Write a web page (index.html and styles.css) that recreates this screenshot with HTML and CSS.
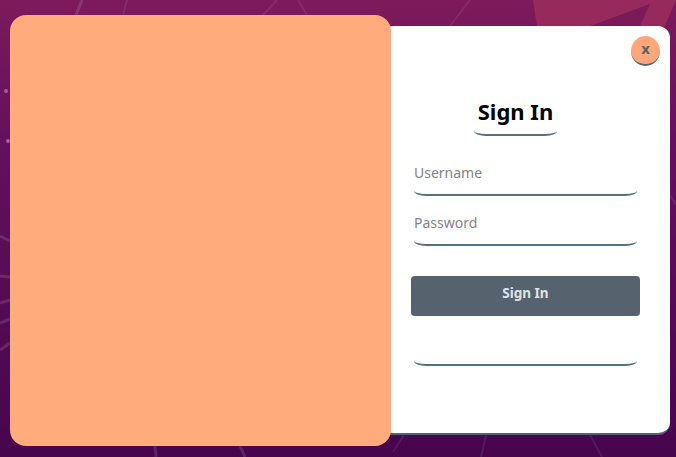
FILE: index.html
```html
<!DOCTYPE html>
<html>
<head>
	<title>Sign In</title>
	<link rel="stylesheet" href="styles.css">
</head>
<body>
	<!--faint lines and dots of the page background-->
	<svg class="backdrop" viewBox="0 0 676 457" aria-hidden="true">
		<path class="shard" d="M533 0H676L665 26H590L537 26Z"/>
		<path class="shard-dark" d="M590 26L650 4L640 26Z"/>
		<g class="lines">
			<path class="thick" d="M82 0L76 15"/>
			<path d="M127 0L123 15"/>
			<path d="M277 0L263 15M298 0L307 15"/>
			<path d="M470 0L450 26"/>
			<path class="thick" d="M0 236L10 241M0 276L10 277M0 303L10 300M0 323L10 319M0 350L10 343"/>
			<path class="thick" d="M155 446L156 457M240 446L245 457"/>
			<path d="M404 435L393 452M486 435L481 457M590 435L602 457"/>
			<path d="M670 195L676 205"/>
		</g>
		<circle class="dot" cx="6" cy="91" r="2"/>
		<circle class="dot" cx="8" cy="141" r="2"/>
	</svg>

	<div class="modal">
		<div class="side-panel"></div>
		<div class="card">
			<button class="close-btn">x</button>
			<h2 class="title">Sign In</h2>
			<form class="login-form">
				<input class="field" type="text" placeholder="Username">
				<input class="field" type="password" placeholder="Password">
				<button class="submit-btn" type="button">Sign In</button>
				<input class="field field-empty" type="text">
			</form>
		</div>
	</div>
</body>
</html>
```

FILE: styles.css
```css
* {
	box-sizing: border-box;
}
html, body {
	height: 100%;
}
body {
	margin: 0;
	padding: 15px 6px 11px 10px;
	overflow: hidden;
	background: linear-gradient(#7d1a5b 0%, #65105f 30%, #47054e 100%);
	font-family: "Noto Sans", "Open Sans", sans-serif;
}
.backdrop {
	position: absolute;
	left: 0;
	top: 0;
	width: 676px;
	height: 457px;
}
.shard {
	fill: #962a5c;
}
.shard-dark {
	fill: #7c1a58;
}
.lines path {
	fill: none;
	stroke: #fff;
	stroke-opacity: 0.08;
	stroke-width: 2;
}
.lines .thick {
	stroke-width: 3;
	stroke-opacity: 0.12;
}
.dot {
	fill: #a45ca6;
}
.modal {
	position: relative;
	display: flex;
	align-items: center;
	height: 431px;
}
.side-panel {
	position: relative;
	z-index: 1;
	flex: none;
	width: 381px;
	height: 100%;
	margin-right: -10px;
	background: #ffab7c;
	border-radius: 16px;
}
.card {
	flex: none;
	display: flex;
	flex-direction: column;
	width: 289px;
	height: 409px;
	padding: 10px 10px 0 33px;
	background: #fff;
	border-radius: 12px;
	border-bottom: 2px solid #56636f;
}
.close-btn {
	align-self: flex-end;
	width: 29px;
	height: 30px;
	padding: 0 0 5px;
	background: #ffa67a;
	color: #56636f;
	font-family: inherit;
	font-size: 15px;
	font-weight: 700;
	border: none;
	border-bottom: 2px solid #56636f;
	border-radius: 50%;
}
.title {
	align-self: flex-start;
	width: 83px;
	height: 42px;
	margin: 28px 0 0 60px;
	color: #000;
	font-size: 22px;
	font-weight: 700;
	line-height: 34px;
	text-align: center;
	white-space: nowrap;
	border-bottom: 2px solid #56707f;
	border-radius: 0 0 12px 12px / 0 0 5px 5px;
}
.login-form {
	display: flex;
	flex-direction: column;
	margin-top: 24px;
}
.field {
	width: 223px;
	height: 36px;
	margin-bottom: 14px;
	padding: 0 0 10px;
	background: transparent;
	color: #333;
	font-family: inherit;
	font-size: 14px;
	border: none;
	border-bottom: 2px solid #56707f;
	border-radius: 0 0 12px 12px / 0 0 5px 5px;
	outline: none;
}
.field::placeholder {
	color: #808589;
}
.submit-btn {
	width: 229px;
	height: 40px;
	margin: 16px 0 0 -3px;
	padding: 0 0 6px;
	background: #56636f;
	color: #dfe3e8;
	font-family: inherit;
	font-size: 13.5px;
	font-weight: 700;
	border: none;
	border-bottom: 1px solid #4d6778;
	border-radius: 4px;
}
.field-empty {
	margin-top: 14px;
}
```
